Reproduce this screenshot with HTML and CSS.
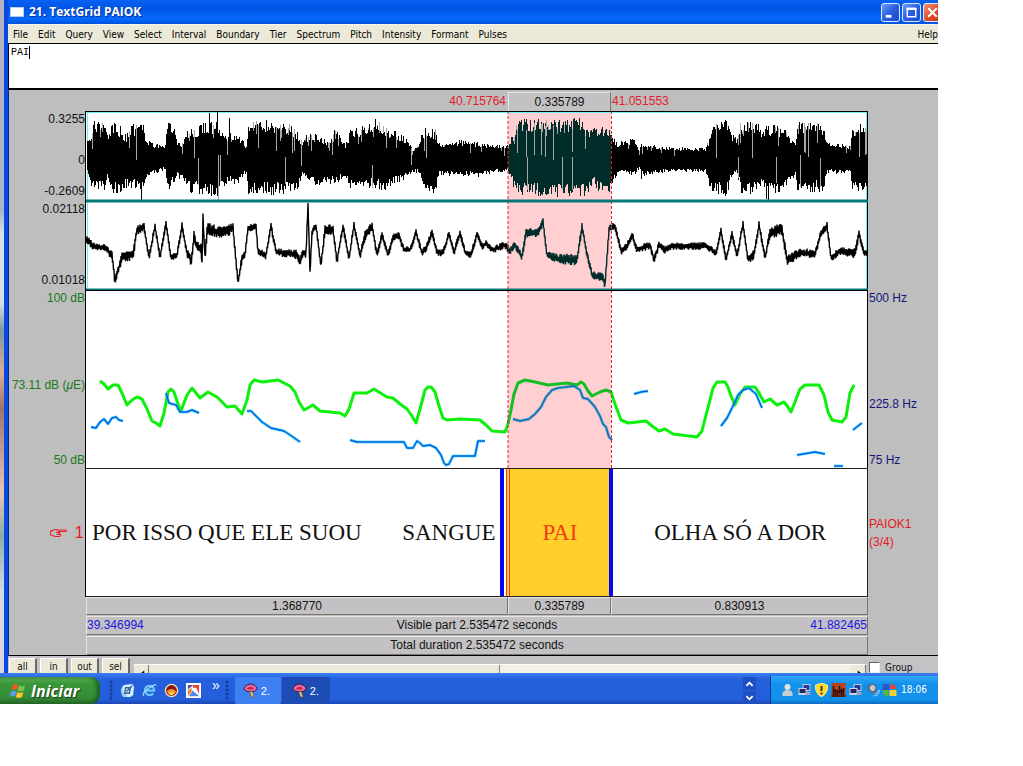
FILE: index.html
```html
<!DOCTYPE html>
<html lang="pt">
<head>
<meta charset="utf-8">
<title>21. TextGrid PAIOK</title>
<link rel="stylesheet" href="styles.css">
</head>
<body>
<div class="desktop">
  <main class="window">
    <header class="titlebar">
      <span class="app-icon"></span>
      <h1 class="title">21. TextGrid PAIOK</h1>
      <button class="win-btn" aria-label="Minimize"><svg viewBox="0 0 18 18"><path d="M4 13h6" stroke="#fff" stroke-width="3"/></svg></button>
      <button class="win-btn" aria-label="Maximize"><svg viewBox="0 0 18 18"><path d="M4.500 5v8.500h9V5M3.500 5h11" fill="none" stroke="#fff" stroke-width="1.500"/><path d="M4 5h10" stroke="#fff" stroke-width="2.500"/></svg></button>
      <button class="win-btn close" aria-label="Close"><svg viewBox="0 0 18 18"><path d="M4.500 4.500l9 9M13.500 4.500l-9 9" stroke="#fff" stroke-width="2.200"/></svg></button>
    </header>
    <nav class="menubar">
      <button>File</button><button>Edit</button><button>Query</button><button>View</button><button>Select</button><button>Interval</button><button>Boundary</button><button>Tier</button><button>Spectrum</button><button>Pitch</button><button>Intensity</button><button>Formant</button><button>Pulses</button><button class="help">Help</button>
    </nav>
    <div class="text-field">
      <textarea class="label-text" aria-label="Interval text" spellcheck="false">PAI</textarea>
      <span class="caret"></span>
    </div>

    <section class="editor">
      <div class="plot-row times">
        <div class="cols">
          <span class="sel-start">40.715764</span>
          <button class="bar">0.335789</button>
          <span class="sel-end">41.051553</span>
        </div>
      </div>

      <div class="plot-row">
        <div class="axis left wave-axis"><span>0.3255</span><span>0</span><span>-0.2609</span></div>
        <svg class="panel wave" viewBox="86 111 782 90" preserveAspectRatio="none">
          <rect class="selection" x="508" y="111" width="103" height="90"/>
          <path class="cyan" d="M87.500 111v90M866.500 111v90M86 112.500h782"/>
          <path class="trace bars-trace" id="wave1"/><path class="trace bars-trace in" id="wave1-in"/><path class="slits" id="slits"/>
          <path class="edge" d="M508 111v90M611.500 111v90"/>
          <path class="frame" d="M86 111.500h782M867.500 111v90"/><path class="teal" d="M86 200.500h782"/>
        </svg>
      </div>

      <div class="plot-row">
        <div class="axis left"><span>0.02118</span><span>0.01018</span></div>
        <svg class="panel wave second" viewBox="86 201 782 89" preserveAspectRatio="none">
          <rect class="selection" x="508" y="201" width="103" height="89"/>
          <path class="cyan" d="M87.500 202v87M866.500 202v87"/>
          <path class="trace" id="wave2"/><path class="trace in" id="wave2-in"/>
          <path class="edge" d="M508 201v89M611.500 201v89"/>
          <path class="frame" d="M867.500 201v89"/><path class="teal" d="M86 201.500h782M86 289.500h782"/>
        </svg>
      </div>

      <div class="plot-row">
        <div class="axis left intensity"><span>100 dB</span><span>73.11 dB (<i>μ</i>E)</span><span>50 dB</span></div>
        <svg class="panel contours" viewBox="86 290 782 178" preserveAspectRatio="none">
          <rect class="selection" x="508" y="290" width="103" height="178"/>
          <g class="green">
            <polyline points="100,381 104,384 108,389 113,385 118,385 122,393 127,405 132,400 137,397 142,399 147,409 152,421 156,423 160,426 164,413 168,392 171,389 174,392 178,404 181,411 187,395 192,388 200,398 208,392 217,397 227,407 235,406 242,414 247,400 250,385 254,380 262,382 278,380 284,383 290,386 295,392 299,402 304,410 313,405 320,411 330,412 340,413 345,416 349,409 354,393 361,393 367,393 374,389 387,397 393,398 400,404 407,409 412,416 416,423 420,409 425,390 428,387 431,387 435,392 439,406 443,418 447,420 460,419 480,420 486,425 492,431 505,432 508,424"/>
            <polyline class="in" points="508,424 511,410 514,394 518,383 525,380 535,382 548,385 567,383 577,385 581,382 584,384 588,391 592,396 600,392 606,390 611,392"/>
            <polyline points="611,392 615,404 621,420 628,423 646,421 652,426 659,431 665,429 673,434 697,437 702,431 706,415 710,400 713,388 717,382 725,382 728,387 731,396 735,405 740,394 745,387 755,387 759,393 764,402 770,399 777,405 784,402 788,407 791,412 795,402 800,389 805,385 819,385 824,395 828,412 832,420 842,422 846,417 850,393 854,385"/>
          </g>
          <g id="pitch-halo" class="halo"></g>
          <g id="pitch" class="blue">
            <polyline points="91,427 96,428 100,422 104,419 108,424 112,418 116,417 119,420 123,421"/>
            <polyline points="166,393 169,403 176,405 180,412 187,412 192,410 199,413"/>
            <polyline points="247,411 251,411 262,422 271,428 284,431 293,437 300,442"/>
            <polyline points="350,440 357,442 404,442 407,448 413,448 417,441 420,443 423,446 430,445 436,448 441,455 444,463 446,465 449,464 453,456 475,456 478,441 485,441"/>
            <polyline class="in" points="513,419 520,421 529,419 535,414 541,407 546,397 552,390 558,388 574,386 580,390 583,398 588,399 595,407 600,416 603,424 606,427 609,437 612,440"/>
            <polyline points="634,394 641,392 648,391"/>
            <polyline points="721,426 727,418 732,408 738,395 743,390 749,388 756,394 762,408"/>
            <polyline points="797,455 815,452 825,454"/>
            <polyline points="834,466 843,466"/>
            <polyline points="853,430 858,426 862,423"/>
          </g>
          <path class="edge" d="M508 290v178M611.500 290v178"/>
          <path class="frame" d="M86 290.500h782M867.500 290v178"/>
        </svg>
        <div class="axis right pitch"><span>500 Hz</span><span>225.8 Hz</span><span>75 Hz</span></div>
      </div>

      <div class="plot-row">
        <div class="tier-number"><svg class="hand" viewBox="0 0 17 10" aria-hidden="true"><path d="M6 2h10v1.500H8M8.500 3.500c1.500 1 1 2.500-.5 2.500h2c1.500 1 .5 2.500-1 2.500H5.500C3.500 8.500 3 7 .5 7V3C3 3 3.500 1 6 1.500l2.500 1M6 4.500h3M6.500 6.500h3" fill="none" stroke="currentColor" stroke-width="1.100"/></svg><span>1</span></div>
        <div class="tier cols">
          <div class="interval first"><span>POR ISSO QUE ELE SUOU</span><span>SANGUE</span></div>
          <div class="interval selected">PAI</div>
          <div class="interval last">OLHA SÓ A DOR</div>
        </div>
        <div class="tier-name"><span>PAIOK1</span><span>(3/4)</span></div>
      </div>

      <div class="plot-row play">
        <div class="bars">
          <div class="cols"><button class="bar">1.368770</button><button class="bar">0.335789</button><button class="bar">0.830913</button></div>
          <button class="bar visible"><span class="time">39.346994</span><span>Visible part 2.535472 seconds</span><span class="time">41.882465</span></button>
          <button class="bar">Total duration 2.535472 seconds</button>
        </div>
      </div>
    </section>

    <footer class="controls">
      <button class="zoom">all</button><button class="zoom">in</button><button class="zoom">out</button><button class="zoom">sel</button>
      <div class="scrollbar">
        <button class="arrow" aria-label="Scroll left"><svg viewBox="0 0 8 8"><path d="M6 0v8L1 4z"/></svg></button>
        <span class="thumb"></span><span class="track"></span>
        <button class="arrow" aria-label="Scroll right"><svg viewBox="0 0 8 8"><path d="M2 0v8l5-4z"/></svg></button>
      </div>
      <label class="group"><input type="checkbox">Group</label>
    </footer>
  </main>

  <footer class="taskbar">
    <button class="start">
      <svg viewBox="0 0 18 18"><path d="M3 3q3-2 5.500 0L7 8.500Q4.500 7 1.500 8.500z" fill="#f0592b"/><path d="M9.500 3.500q3 2 6.500 0L14.500 9q-3.500 2-6.500 0z" fill="#7cc242"/><path d="M1.200 10q3-1.500 5.500 0l-1.500 5.500Q3 14-.3 15.500z" fill="#5a9cf0"/><path d="M7.700 10.500q3 2 6.500 0L12.700 16q-3.500 2-6.500 0z" fill="#fbc52c"/></svg>
      <span>Iniciar</span>
    </button>
    <span class="grip"></span>
    <div class="quick">
      <button aria-label="Show desktop"><svg viewBox="0 0 16 16"><path d="M4 2l9-1 2 3-1 9-3 2H4l-2-2V5z" fill="#d9ecfa"/><path d="M6 5h5l-1 6H5zM7 9l6-6" fill="none" stroke="#2c6a9c" stroke-width="1.500"/><path d="M2 6q-1 7 5 8" fill="none" stroke="#8fc6ee" stroke-width="2"/></svg></button>
      <button aria-label="Internet Explorer"><svg viewBox="0 0 16 16"><path d="M12 11a5 5 0 1 1 1-3H4" fill="none" stroke="#6bc7f5" stroke-width="2.400"/><path d="M2 14Q-1 11 8 5q7-5 7-2" fill="none" stroke="#a5def8" stroke-width="1.200"/></svg></button>
      <button aria-label="Browser"><svg viewBox="0 0 16 16"><circle cx="8" cy="8" r="6.500" fill="#8c1712" stroke="#f4d8b8" stroke-width="1.500"/><path d="M3 9q5-5 10 0l-2 3H5z" fill="#f39a28"/><path d="M5 10h6l-2 3H7z" fill="#ffe25c"/></svg></button>
      <button aria-label="Pictures"><svg viewBox="0 0 16 16"><path d="M0 0h16v16H0z" fill="#fff"/><path d="M2 2h6L2 7z" fill="#5a4aa8"/><path d="M8 2h6v10L11 5H7z" fill="#e8452e"/><path d="M2 8l4-3v4l-4 5z" fill="#f07a3a"/><path d="M3 14l5-7 6 7z" fill="#5585e8"/><path d="M7 8l2-1 4 6z" fill="#fff"/></svg></button>
    </div>
    <span class="more">»</span>
    <span class="grip second-grip"></span>
    <button class="task"><svg viewBox="0 0 16 16"><path d="M1 6q1-4 7-5 6 1 7 5-2 4-7 3-5 1-7-3z" fill="#e56aa8" stroke="#40102c"/><path d="M4 6q4-4 8 0-4 2-8 0" fill="#c52c3c"/><path d="M7 9h3l2 6H9z" fill="#edc48a" stroke="#59402c" stroke-width=".7"/></svg>2.</button>
    <button class="task active"><svg viewBox="0 0 16 16"><path d="M1 6q1-4 7-5 6 1 7 5-2 4-7 3-5 1-7-3z" fill="#e56aa8" stroke="#40102c"/><path d="M4 6q4-4 8 0-4 2-8 0" fill="#c52c3c"/><path d="M7 9h3l2 6H9z" fill="#edc48a" stroke="#59402c" stroke-width=".7"/></svg>2.</button>
    <div class="scroll-tasks">
      <button aria-label="Previous tasks"><svg viewBox="0 0 10 8"><path d="M1.500 6L5 2.500 8.500 6" fill="none" stroke="#fff" stroke-width="2"/></svg></button>
      <button aria-label="Next tasks"><svg viewBox="0 0 10 8"><path d="M1.500 2L5 5.500 8.500 2" fill="none" stroke="#fff" stroke-width="2"/></svg></button>
    </div>
    <div class="tray">
      <svg viewBox="0 0 14 14"><circle cx="7" cy="4" r="3" fill="#e2e4e0"/><path d="M2 13q-1-6 5-6t5 6z" fill="#c8cdd0"/></svg>
      <svg viewBox="0 0 14 14"><path d="M5 1h8v7H5z" fill="#c4cbe0"/><path d="M6 2h6v5H6z" fill="#213c9c"/><path d="M1 5h8v7H1z" fill="#cfd2e3"/><path d="M2 6h6v4H2z" fill="#22265c"/><path d="M8 9h5v3H8z" fill="#a5a3c0"/></svg>
      <svg viewBox="0 0 14 14"><path d="M7 0l6 2q1 8-6 12Q0 10 1 2z" fill="#ffd92e" stroke="#fff3a0" stroke-width=".8"/><path d="M7 3v5M7 9.500v2" stroke="#46380c" stroke-width="2"/></svg>
      <svg viewBox="0 0 14 14"><path d="M0 0h14v14H0z" fill="#b8441c"/><path d="M2 3v9M4 6v6M6 7v5M8 3v8M10 6v6M12 5v7M2 8h3M8 8h4M0 13h14" stroke="#35100c" stroke-width="1.600"/></svg>
      <svg viewBox="0 0 14 14"><path d="M5 1h8v7H5z" fill="#c4cbe0"/><path d="M6 2h6v5H6z" fill="#213c9c"/><path d="M1 5h8v7H1z" fill="#cfd2e3"/><path d="M2 6h6v4H2z" fill="#22265c"/><path d="M8 9h5v3H8z" fill="#a5a3c0"/></svg>
      <svg viewBox="0 0 14 14"><path d="M2 4l5-3 3 10-6-3z" fill="#a5a5a2" stroke="#505860"/><circle cx="7" cy="5" r="3.500" fill="#c9c9c5" stroke="#555d66"/><path d="M9 11q4 0 4-4M8 13q6 0 6-6" stroke="#9cc9f8" fill="none"/></svg>
      <svg viewBox="0 0 14 14"><path d="M1 1h6v6H0z" fill="#2b55c8"/><path d="M8 1q5 0 6 5H8z" fill="#e84430"/><path d="M0 7h6v7q-6-1-6-7z" fill="#56b640"/><path d="M7 7h7v6H7z" fill="#f6cf35"/></svg>
      <time>18:06</time>
    </div>
  </footer>
</div>
<script src="traces.js"></script>
</body>
</html>
```
FILE: styles.css
```css
* { box-sizing: border-box; }

body {
  margin: 0;
  padding-right: 85px;
  background: #fff;
  font: 12px/14px "Liberation Sans", Arial, sans-serif;
  color: #111;
}

button {
  font: inherit;
  color: inherit;
  border: 0;
  padding: 0;
  background: none;
}

svg { display: block; }

.desktop { background: linear-gradient(#b4b3c2 0 11%, #a9b6c6 30%, #d9dfe8 33% 43%, #7c9aa2 47%, #dcae94 53%, #9c7668 58%, #e8c6b4 70%, #8cb0a4 76%, #d5dade 84%, #d8d8e0); }

.window {
  margin-left: 4px;
  border-left: 4px solid #0a48e4;
  box-shadow: inset 1px 0 #042a8c;
  background: #bebebe;
}

.titlebar {
  display: flex;
  align-items: center;
  gap: 2px;
  height: 24px;
  padding-left: 2px;
  background: linear-gradient(#0862f2, #0054e3 35%, #0468ff 80%, #0350d8);
  overflow: hidden;
}

.app-icon {
  width: 14px;
  height: 10px;
  margin-right: 3px;
  background: #fff;
  border: 1px solid #b8ccf4;
}

.title {
  flex: 1;
  margin: 0;
  font: bold 12px/24px "Open Sans", "Noto Sans", sans-serif;
  color: #fff;
  text-shadow: 1px 1px #06318c;
}

.win-btn {
  flex: none;
  width: 19px;
  height: 19px;
  border: 1px solid #dce8ff;
  border-radius: 3px;
  background: linear-gradient(135deg, #6d9cf8, #2a5ce0 50%, #1c4cc8);
}

.win-btn.close {
  margin-right: -4px;
  background: linear-gradient(135deg, #f0937a, #dd4c26 55%, #c03414);
}

.menubar {
  display: flex;
  gap: 10px;
  height: 20px;
  padding-left: 5px;
  background: #ece9d8;
  border-bottom: 1px solid #000;
  border-top: 1px solid #f8f5ea;
  font: 10px/17px "DejaVu Sans Condensed", "DejaVu Sans", sans-serif;
  color: #000;
}

.menubar .help { margin-left: auto; }

.text-field { position: relative; }

.label-text {
  display: block;
  width: 100%;
  height: 46px;
  padding: 3px 2px;
  border: 0;
  border-left: 1px solid #000;
  border-bottom: 2px solid #000;
  outline: 0;
  resize: none;
  background: #fff;
  color: #000;
  font: 10px/12px "Liberation Mono", "Courier New", monospace;
}

.caret {
  position: absolute;
  left: 21px;
  top: 2px;
  width: 1px;
  height: 13px;
  background: #000;
}

.editor {
  padding: 2px 0 0 1px;
  border-bottom: 1px solid #000;
}

.plot-row {
  display: grid;
  grid-template-columns: 77px minmax(0, 1fr) 70px;
}

.times > *, .play > * { grid-column: 2; }

.cols {
  display: grid;
  grid-template-columns: 422fr 103fr 257fr;
}

.times .cols { height: 19px; line-height: 19px; color: #e21c2c; }
.sel-start { text-align: right; padding-right: 2px; }
.sel-end { padding-left: 1px; }

.bar {
  color: #111;
  text-align: center;
  background: #c3c1c3;
  border: 1px solid;
  border-color: #e9e5df #77746e #77746e #e9e5df;
}

.axis {
  display: flex;
  flex-direction: column;
  justify-content: space-between;
  padding: 1px 2px 3px 0;
  text-align: right;
  white-space: nowrap;
}

.axis.left { border-right: 1px solid #000; padding-right: 0; }

.wave-axis {
  display: grid;
  grid-template: 41fr 31fr auto / 1fr;
}

.intensity, .pitch {
  display: grid;
  grid-template: 88fr 75fr auto / 1fr;
  padding-bottom: 1px;
}

.intensity { color: #187a18; }

.pitch {
  grid-template-rows: 107fr 56fr auto;
  padding-left: 1px;
  text-align: left;
  color: #14147c;
}

.panel {
  width: 100%;
  height: 90px;
  background: #fff;
}

.second { height: 89px; }
.contours { height: 178px; }

.selection { fill: #ffcfd1; }
.edge { stroke: #e0223c; stroke-dasharray: 3 2; fill: none; }
.frame { stroke: #000; fill: none; }
.teal { stroke: #007878; stroke-width: 2; fill: none; }
.cyan { stroke: #70f0f0; fill: none; }
.trace { stroke: #000; fill: none; stroke-width: 1.4; stroke-linejoin: bevel; }
.bars-trace { stroke-width: 1; shape-rendering: crispEdges; }
.trace.in { stroke: #002c2a; }
.slits { stroke: #a8a8a8; fill: none; shape-rendering: crispEdges; }
.green polyline, .blue polyline, .halo polyline { fill: none; stroke-linejoin: round; }
.green { stroke: #0cf00c; stroke-width: 3; }
.green .in { stroke: #16be26; }
.halo { stroke: #00c8ff; stroke-width: 3; opacity: .6; }
.blue { stroke: #0060e0; stroke-width: 1.5; }
.blue .in { stroke: #0870b8; }
.halo .in { stroke: #2898c0; }

.tier-number {
  display: flex;
  align-items: center;
  justify-content: flex-end;
  gap: 8px;
  padding-right: 1px;
  border-right: 1px solid #000;
  color: #e8202c;
  font-size: 17px;
}

.hand { width: 17px; height: 10px; }

.tier {
  min-height: 129px;
  background: #fff;
  border: 1px solid #222;
  border-left: 0;
  font: 23px/26px "Liberation Serif", "Times New Roman", serif;
}

.interval {
  display: flex;
  align-items: center;
  justify-content: center;
  white-space: nowrap;
}

.interval.first {
  justify-content: space-between;
  padding: 0 5px 0 6px;
  border-right: 4px solid #0808f0;
  margin-right: 3px;
}

.interval.selected {
  background: #ffd02a;
  color: #f23c14;
  border-left: 4px double #f03828;
  border-right: 1px solid #dca018;
  margin-left: -1px;
}

.interval.last { border-left: 4px solid #0808f0; margin-left: -1px; }

.tier-name {
  display: flex;
  flex-direction: column;
  justify-content: center;
  gap: 4px;
  padding-left: 1px;
  color: #e01c24;
}

.bars { display: grid; gap: 1px; }
.bars .bar { height: 19px; line-height: 17px; }
.bars .cols .bar { height: 18px; }
.visible { display: flex; justify-content: space-between; }
.visible .time { color: #1818e0; }

.controls {
  display: flex;
  gap: 3px;
  height: 17px;
  padding-left: 1px;
  background: #c5c2c6;
  overflow: hidden;
  font: 10px/15px "DejaVu Sans Condensed", "DejaVu Sans", sans-serif;
}

.zoom {
  width: 28px;
  height: 20px;
  margin-top: 2px;
  padding-bottom: 4px;
  background: #ece9d8;
  border: 1px solid;
  border-width: 1px 2px 1px 1px;
  border-color: #fff #6c6a64 #6c6a64 #fff;
}

.scrollbar {
  display: flex;
  flex: 1;
  height: 16px;
  margin: 8px 0 0 1px;
  border-top: 1px solid #fff;
  background: #ece9d8;
}

.arrow {
  width: 15px;
  height: 14px;
  padding: 3px 3px 0 5px;
  border-right: 1px solid #77736a;
}

.arrow svg { width: 7px; height: 8px; }
.thumb { flex: 350; border-right: 1px solid #88847a; }
.track { flex: 352; background: #f4f2e8; }

.group { display: flex; align-items: center; gap: 5px; width: 69px; padding-top: 5px; }

.group input {
  appearance: none;
  width: 11px;
  height: 11px;
  margin: 0;
  background: #fff;
  border: 1px solid #66645e;
  border-right-color: #eee;
  border-bottom-color: #eee;
}

.taskbar {
  display: flex;
  align-items: stretch;
  height: 31px;
  padding-top: 4px;
  background: linear-gradient(#3a80f4, #2460dc 20%, #245edb 85%, #1c48b4);
  color: #fff;
}

.start {
  display: flex;
  align-items: center;
  gap: 4px;
  width: 100px;
  padding-left: 10px;
  border-radius: 0 9px 9px 0;
  background: linear-gradient(#62b25c, #389838 25%, #368c36 75%, #286c2a);
  box-shadow: inset -3px 0 4px #1c5c20;
  font: italic bold 16px/22px "Open Sans", "Noto Sans", sans-serif;
  text-shadow: 1px 1px 1px #143c14;
}

.start svg { width: 17px; height: 17px; }

.grip {
  width: 4px;
  margin: 3px 7px 3px 9px;
  background: radial-gradient(circle, #153e9c 1px, transparent 2px) 0 0 / 4px 4px;
}

.quick { display: flex; gap: 7px; align-items: center; }
.quick svg { width: 15px; height: 15px; }
.more { margin-left: 11px; font-size: 14px; line-height: 16px; }
.second-grip { margin: 3px 6px 3px 5px; }

.task {
  display: flex;
  align-items: center;
  gap: 3px;
  width: 46px;
  margin-right: 1px;
  padding-left: 8px;
  border-radius: 2px;
  background: #3c80f2;
  font-size: 11px;
}

.task svg { width: 15px; height: 15px; }
.task.active { width: 48px; padding-left: 10px; background: #1c4cb4; }

.scroll-tasks {
  display: grid;
  gap: 1px;
  margin: 0 14px 0 auto;
}

.scroll-tasks button { padding: 2px; background: #1e50c4; }
.scroll-tasks svg { width: 9px; height: 8px; }

.tray {
  display: flex;
  align-items: center;
  gap: 2px;
  width: 168px;
  margin-top: -1px;
  padding-left: 9px;
  border-left: 1px solid #08389c;
  background: linear-gradient(#30a8f4, #1290ea 30%, #1290ea 85%, #0c6cc0);
  font: 10px/14px "DejaVu Sans Condensed", "DejaVu Sans", sans-serif;
}

.tray svg { width: 15px; height: 14px; flex: none; }
.tray time { margin-left: 2px; }
```
FILE: traces.js
```js
// Amplitude envelope of the sound: x, top, bottom.
const envelope = [
  [86,146,167],[90,139,182],[93,122,190],[104,124,188],[107,136,178],[112,124,190],[120,129,191],[125,137,184],
  [132,127,186],[143,125,190],[146,142,174],[155,147,169],[165,147,167],[167,125,185],[174,127,184],[177,142,175],
  [182,145,176],[185,134,183],[192,126,190],[196,137,184],[200,125,193],[217,124,193],[222,135,184],[228,137,180],
  [237,134,184],[242,143,174],[246,148,170],[248,123,193],[260,122,190],[280,122,192],[292,128,189],[297,135,186],
  [302,147,173],[305,136,178],[320,137,183],[327,142,179],[335,131,182],[345,148,172],[351,128,187],[357,130,185],
  [367,127,183],[375,123,188],[385,128,186],[395,134,180],[408,141,174],[412,152,168],[419,146,170],[422,134,187],
  [427,128,191],[435,132,191],[438,146,172],[450,145,172],[467,142,173],[477,145,173],[490,147,170],[507,148,167],
  [513,136,183],[518,120,192],[543,122,193],[563,121,193],[582,120,195],[587,132,190],[593,128,180],[598,127,190],
  [611,130,190],[612,138,180],[617,146,172],[625,142,171],[635,142,171],[639,153,164],[642,144,172],[653,148,170],
  [667,150,168],[705,151,168],[708,142,180],[712,126,191],[727,122,192],[730,135,176],[737,141,170],[740,126,190],
  [745,122,190],[758,126,190],[763,134,182],[767,126,192],[782,128,190],[787,136,180],[795,143,172],[797,122,187],
  [823,126,190],[827,145,170],[850,148,170],[852,130,190],[858,124,191],[868,123,190]
];

const peaks = { 141: [125, 200], 209: [113, 193], 217: [111, 196], 229: [118, 181], 375: [119, 188], 766: [126, 199], 768: [126, 200], 641: [144, 179] };

// Second channel: x, y, thickness of the line.
const line = [
  [86,238,4],[93,246,3],[105,248,3],[112,255,4],[115,281,4],[122,257,4],[133,254,5],[137,230,4],[144,226,4],
  [149,258,3],[155,226,3],[160,257,3],[166,224,3],[171,258,3],[177,255,3],[182,226,3],[187,254,3],[190,257,5],
  [191,265,2],[194,236,5],[196,246,4],[201,248,4],[202,265,2],[203,216,2],[205,258,3],[207,230,6],[223,233,5],
  [233,228,4],[238,283,3],[242,258,4],[245,255,3],[248,229,3],[256,226,3],[258,251,3],[266,256,3],[271,226,3],
  [276,252,3],[297,254,4],[300,262,4],[302,254,4],[306,253,4],[308,204,1],[310,274,2],[312,232,3],[316,226,3],
  [321,266,3],[325,229,4],[333,230,4],[337,261,3],[343,226,3],[349,259,3],[354,225,3],[360,256,3],[365,236,4],
  [372,226,4],[377,255,3],[382,235,3],[388,255,3],[393,237,3],[399,236,3],[404,250,3],[410,250,3],[416,233,3],
  [422,253,3],[426,248,3],[432,233,3],[437,252,3],[443,253,3],[449,234,3],[454,252,3],[460,233,3],[465,252,3],
  [471,255,3],[477,234,3],[482,246,3],[486,244,3],[493,250,3],[505,245,3],[510,251,3],[515,245,3],[522,257,3],
  [526,232,4],[538,233,4],[543,222,3],[547,255,3],[560,259,4],[577,260,5],[582,227,3],[587,254,3],[592,275,3],
  [603,277,4],[605,286,3],[609,229,3],[615,226,3],[621,251,3],[627,246,3],[632,235,3],[637,250,3],[650,245,3],
  [654,260,3],[659,245,3],[665,250,3],[672,246,3],[707,246,3],[716,253,3],[721,231,3],[726,260,3],[732,234,3],
  [737,256,3],[743,224,3],[748,260,3],[754,255,4],[759,225,3],[765,258,3],[770,232,5],[782,230,5],[787,260,4],
  [800,253,4],[815,254,4],[820,236,3],[827,225,3],[831,258,3],[840,251,3],[855,253,4],[859,234,3],[864,252,3],
  [868,253,3]
];

let seed = 7;
const random = () => (seed = (seed * 16807) % 2147483647) / 2147483647;

function at(points, x) {
  let i = 1;
  while (i < points.length - 1 && points[i][0] < x) i++;
  const a = points[i - 1], b = points[i], t = Math.min(1, (x - a[0]) / (b[0] - a[0]));
  return [a[1] + (b[1] - a[1]) * t, a[2] + (b[2] - a[2]) * t];
}

const selected = x => x >= 508 && x < 611;
const set = (id, d) => document.getElementById(id).setAttribute("d", d);

const wave = ["", ""], gray = [];
for (let x = 87; x < 867; x++) {
  const [top, bottom] = at(envelope, x);
  const reach = (bottom - top) / 5;
  const t = peaks[x] ? peaks[x][0] : Math.max(114, top - 3 + random() * reach);
  const b = peaks[x] ? peaks[x][1] : Math.min(198, bottom + 4 - random() * reach);
  wave[+selected(x)] += `M${x + .5} ${t.toFixed(0)}V${b.toFixed(0)}`;
  if (random() < .12) gray.push(`M${x + .5} ${t.toFixed(0)}v${(reach * random() * 2).toFixed(0)}`);
}
set("wave1", wave[0]);
set("wave1-in", wave[1]);
for (const [x, a, b] of [[136,125,160],[194,134,158],[198,158,185],[218,155,200],[220,155,182],[285,157,184],[301,140,166],[372,165,188],[411,148,165],[526,130,157],[527,157,190],[534,123,155],[541,124,155],[545,126,157],[553,125,160],[562,157,190],[572,157,190],[716,124,157],[738,157,178],[752,123,158],[776,157,183],[800,155,187],[804,123,152],[808,123,157],[820,158,187]])
  gray.push(`M${x + .5} ${a}V${b}`);
set("slits", gray.join(""));

const second = ["M86 238", "M508 250"];
for (let x = 86.5; x < 868; x += .5) {
  const [y, h] = at(line, x);
  const side = (x * 2) % 2 ? 1 : -1;
  const cmd = x === 611 ? "M" : "L";
  second[+selected(x)] += `${cmd}${x} ${(y + side * h * (.4 + random() * .9)).toFixed(1)}`;
}
set("wave2", second[0]);
set("wave2-in", second[1]);

document.getElementById("pitch-halo").innerHTML = document.getElementById("pitch").innerHTML;
```
